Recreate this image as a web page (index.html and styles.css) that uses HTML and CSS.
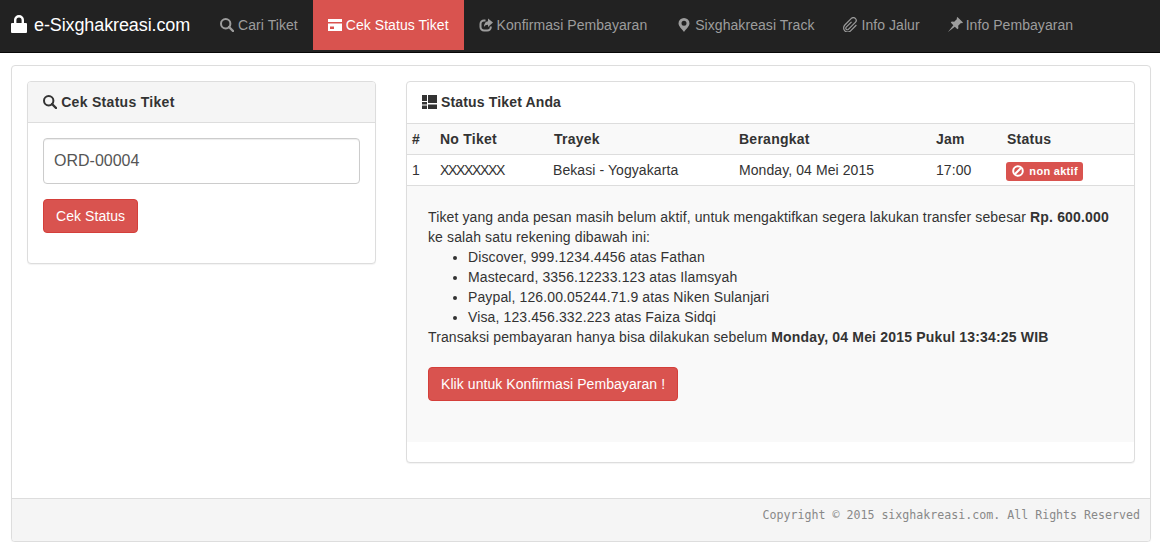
FILE: index.html
```html
<!DOCTYPE html>
<html lang="en">
<head>
    <meta charset="UTF-8">
    <meta name="viewport" content="width=device-width, initial-scale=1.0">
    <title>Cek Status Tiket</title>
    <link rel="stylesheet" href="styles.css">
</head>
<body>
    <!-- Navbar -->
    <nav class="navbar">
        <a class="brand" href="#">
            <svg class="brand-icon" viewBox="0 0 16 18"><path fill="#fff" fill-rule="evenodd" d="M3 8V5a5 5 0 0 1 10 0v3h2a1 1 0 0 1 1 1v8a1 1 0 0 1-1 1H1a1 1 0 0 1-1-1V9a1 1 0 0 1 1-1zm2.400 0h5.200V5.200a2.600 2.600 0 0 0-5.200 0z"/></svg>
            e-Sixghakreasi.com
        </a>
        <a class="nav-item" href="#">
            <svg class="icon" viewBox="0 0 14 14"><circle cx="5.700" cy="5.700" r="4.700" fill="none" stroke="currentColor" stroke-width="2"/><path d="M9 9l4 4" stroke="currentColor" stroke-width="2.400" stroke-linecap="round"/></svg>
            Cari Tiket
        </a>
        <a class="nav-item active" href="#">
            <svg class="icon" viewBox="0 0 14 14"><path fill="currentColor" fill-rule="evenodd" d="M0 1h14v3H0zM0 5.500h14V13H0zM2 8.500v2.500h4V8.500z"/></svg>
            Cek Status Tiket
        </a>
        <a class="nav-item" href="#">
            <svg class="icon" viewBox="0 0 14 14"><path fill="none" stroke="currentColor" stroke-width="2" d="M11.800 8.500v.5a3.500 3.500 0 0 1-3.500 3.500H5A3.500 3.500 0 0 1 1.500 9V6A3.500 3.500 0 0 1 5 2.500h1.500"/><path fill="currentColor" d="M9 .500l5 4-5 4.500V6.800C7 6.800 5.800 7.500 5 9c0-3 1.500-5.500 4-5.700z"/></svg>
            Konfirmasi Pembayaran
        </a>
        <a class="nav-item" href="#">
            <svg class="icon" viewBox="0 0 14 14"><path fill="currentColor" fill-rule="evenodd" d="M7 0a5.500 5.500 0 0 1 5.500 5.500c0 3-4 6-5.500 8.500-1.500-2.500-5.500-5.500-5.500-8.500A5.500 5.500 0 0 1 7 0zm0 2.800a2.500 2.500 0 1 0 0 5 2.500 2.500 0 0 0 0-5z"/></svg>
            Sixghakreasi Track
        </a>
        <a class="nav-item" href="#">
            <svg class="icon icon-wide" viewBox="0 0 14 14"><path fill="none" stroke="currentColor" stroke-width="1.100" d="M8 4.500L3 9.500a1.400 1.400 0 0 0 2 2L11.500 5a2.600 2.600 0 0 0-3.700-3.700L1.700 7.500a3.800 3.800 0 0 0 5.400 5.400L12.500 7.500"/></svg>
            Info Jalur
        </a>
        <a class="nav-item" href="#">
            <svg class="icon icon-wide icon-pin" viewBox="0 0 14 14"><path fill="currentColor" d="M8.800 0L14 5.200l-.9.700-1-.3L9.500 8.200l.2 2.300-.9.900-2.400-2.400L0 14l5-6.400-2.400-2.400.9-.9 2.300.2L8.400 1.900l-.3-1z"/></svg>
            Info Pembayaran
        </a>
    </nav>

    <div class="page-panel">
        <div class="page-body">
            <!-- Form cek status -->
            <div class="panel panel-left">
                <div class="panel-heading">
                    <svg class="icon" viewBox="0 0 14 14"><circle cx="5.700" cy="5.700" r="4.700" fill="none" stroke="currentColor" stroke-width="2"/><path d="M9 9l4 4" stroke="currentColor" stroke-width="2.400" stroke-linecap="round"/></svg>
                    Cek Status Tiket
                </div>
                <form class="panel-body">
                    <input class="input-ticket" type="text" value="ORD-00004">
                    <button class="btn" type="button">Cek Status</button>
                </form>
            </div>

            <!-- Status tiket -->
            <div class="panel panel-right">
                <div class="panel-title">
                    <svg class="icon icon-tasks" viewBox="0 0 15 14"><path fill="currentColor" d="M0 0h5v6H0zM0 7h5v2.500H0zM0 10.500h5V14H0zM6 0h9v8H6zM6 9.500h9V14H6z"/></svg>
                    Status Tiket Anda
                </div>
                <table class="ticket-table">
                    <colgroup>
                        <col class="col-no">
                        <col class="col-ticket">
                        <col class="col-route">
                        <col class="col-date">
                        <col class="col-time">
                        <col>
                    </colgroup>
                    <thead>
                        <tr>
                            <th>#</th>
                            <th>No Tiket</th>
                            <th class="th-nudge">Trayek</th>
                            <th>Berangkat</th>
                            <th>Jam</th>
                            <th class="th-nudge">Status</th>
                        </tr>
                    </thead>
                    <tbody>
                        <tr>
                            <td>1</td>
                            <td class="ticket-code">XXXXXXXX</td>
                            <td>Bekasi - Yogyakarta</td>
                            <td>Monday, 04 Mei 2015</td>
                            <td>17:00</td>
                            <td>
                                <span class="label">
                                    <svg class="label-icon" viewBox="0 0 12 12"><circle cx="6" cy="6" r="4.800" fill="none" stroke="#fff" stroke-width="2"/><path d="M3 9l6-6" stroke="#fff" stroke-width="2"/></svg>
                                    non aktif
                                </span>
                            </td>
                        </tr>
                    </tbody>
                </table>
                <div class="ticket-detail">
                    Tiket yang anda pesan masih belum aktif, untuk mengaktifkan segera lakukan transfer sebesar <b>Rp. 600.000</b> ke salah satu rekening dibawah ini:
                    <ul>
                        <li>Discover, 999.1234.4456 atas Fathan</li>
                        <li>Mastecard, 3356.12233.123 atas Ilamsyah</li>
                        <li>Paypal, 126.00.05244.71.9 atas Niken Sulanjari</li>
                        <li>Visa, 123.456.332.223 atas Faiza Sidqi</li>
                    </ul>
                    Transaksi pembayaran hanya bisa dilakukan sebelum <b>Monday, 04 Mei 2015 Pukul 13:34:25 WIB</b>
                    <div class="detail-action">
                        <button class="btn" type="button">Klik untuk Konfirmasi Pembayaran !</button>
                    </div>
                </div>
            </div>
        </div>
        <div class="page-footer">Copyright © 2015 sixghakreasi.com. All Rights Reserved</div>
    </div>
</body>
</html>
```

FILE: styles.css
```css
* {
    box-sizing: border-box;
}

body {
    font-family: "Liberation Sans", Arial, sans-serif;
    font-size: 14px;
    line-height: 20px;
    color: #333;
    background-color: #fff;
    margin: 0;
}

a {
    text-decoration: none;
}

.icon {
    width: 14px;
    height: 14px;
    vertical-align: -2px;
}

.icon-wide {
    width: 15px;
    height: 15px;
    margin-left: -2px;
}

.icon-pin {
    margin-right: -1px;
}

.icon-tasks {
    width: 15px;
}

/* Navbar */
.navbar {
    display: flex;
    align-items: flex-start;
    height: 53px;
    padding-left: 11px;
    background-color: #222;
    border-bottom: 1px solid #080808;
}

.brand {
    display: flex;
    align-items: center;
    gap: 7px;
    height: 50px;
    padding-right: 15px;
    font-size: 18px;
    letter-spacing: -0.11px;
    color: #fff;
}

.brand-icon {
    width: 16px;
    height: 18px;
    margin-top: -3px;
}

.nav-item {
    display: block;
    padding: 15px;
    color: #9d9d9d;
    letter-spacing: 0.06px;
    white-space: nowrap;
}

.nav-item.active {
    color: #fff;
    background-color: #d9534f;
}

/* Outer panel */
.page-panel {
    margin: 12px 9px 0 11px;
    background-color: #fff;
    border: 1px solid #ddd;
    border-radius: 4px;
    box-shadow: 0 1px 1px rgba(0, 0, 0, 0.05);
}

.page-body {
    display: flex;
    align-items: flex-start;
    gap: 30px;
    padding: 15px 15px 35px;
}

.panel {
    background-color: #fff;
    border: 1px solid #ddd;
    border-radius: 4px;
    box-shadow: 0 1px 1px rgba(0, 0, 0, 0.05);
}

.panel-left {
    flex: 0 0 349px;
}

.panel-right {
    flex: 1;
    padding-bottom: 20px;
    overflow: hidden;
}

.panel-heading,
.panel-title {
    padding: 10px 15px;
    font-weight: bold;
    letter-spacing: 0.3px;
    border-bottom: 1px solid #ddd;
}

.panel-heading {
    height: 41px;
    background-color: #f5f5f5;
    border-radius: 3px 3px 0 0;
}

.panel-title {
    height: 42px;
    letter-spacing: 0.15px;
}

.panel-body {
    padding: 15px 15px 30px;
}

.input-ticket {
    display: block;
    width: 100%;
    height: 46px;
    padding: 10px;
    font-family: inherit;
    font-size: 16px;
    color: #555;
    background-color: #fff;
    border: 1px solid #ccc;
    border-radius: 4px;
    box-shadow: inset 0 1px 1px rgba(0, 0, 0, 0.075);
    margin-bottom: 15px;
}

.btn {
    display: block;
    height: 34px;
    padding: 6px 12px;
    font-family: inherit;
    font-size: 14px;
    line-height: 20px;
    letter-spacing: 0.07px;
    color: #fff;
    background-color: #d9534f;
    border: 1px solid #d43f3a;
    border-radius: 4px;
}

/* Table */
.ticket-table {
    width: 100%;
    table-layout: fixed;
    border-collapse: collapse;
}

.col-no {
    width: 28px;
}

.col-ticket {
    width: 113px;
}

.col-route {
    width: 186px;
}

.col-date {
    width: 197px;
}

.col-time {
    width: 70px;
}

.ticket-table th,
.ticket-table td {
    padding: 5px;
    text-align: left;
    border-bottom: 1px solid #ddd;
}

.ticket-table td {
    height: 31px;
    letter-spacing: 0.08px;
}

.ticket-table th {
    height: 30px;
    letter-spacing: 0.25px;
    background-color: #f9f9f9;
}

.ticket-table .th-nudge {
    padding-left: 6px;
}

.ticket-table .ticket-code {
    letter-spacing: -1.33px;
}

.label {
    display: inline-block;
    width: 77px;
    height: 19px;
    margin-top: 2px;
    margin-bottom: -1px;
    padding-left: 6px;
    font-size: 11px;
    font-weight: bold;
    line-height: 19px;
    letter-spacing: 0.3px;
    color: #fff;
    white-space: nowrap;
    background-color: #d9534f;
    border-radius: 3px;
    vertical-align: top;
}

.label-icon {
    width: 12px;
    height: 12px;
    margin-right: 2px;
    vertical-align: -2px;
}

.ticket-detail {
    padding: 21px 21px 41px;
    letter-spacing: 0.12px;
    background-color: #f9f9f9;
}

.ticket-detail b {
    letter-spacing: 0.18px;
}

.ticket-detail ul {
    margin: 0;
    padding-left: 40px;
}

.detail-action {
    margin-top: 20px;
}

/* Footer */
.page-footer {
    height: 43px;
    padding: 6px 10px;
    font-family: "DejaVu Sans Mono", monospace;
    font-size: 11.62px;
    color: #888;
    text-align: right;
    background-color: #f5f5f5;
    border-top: 1px solid #ddd;
    border-radius: 0 0 3px 3px;
}
```
